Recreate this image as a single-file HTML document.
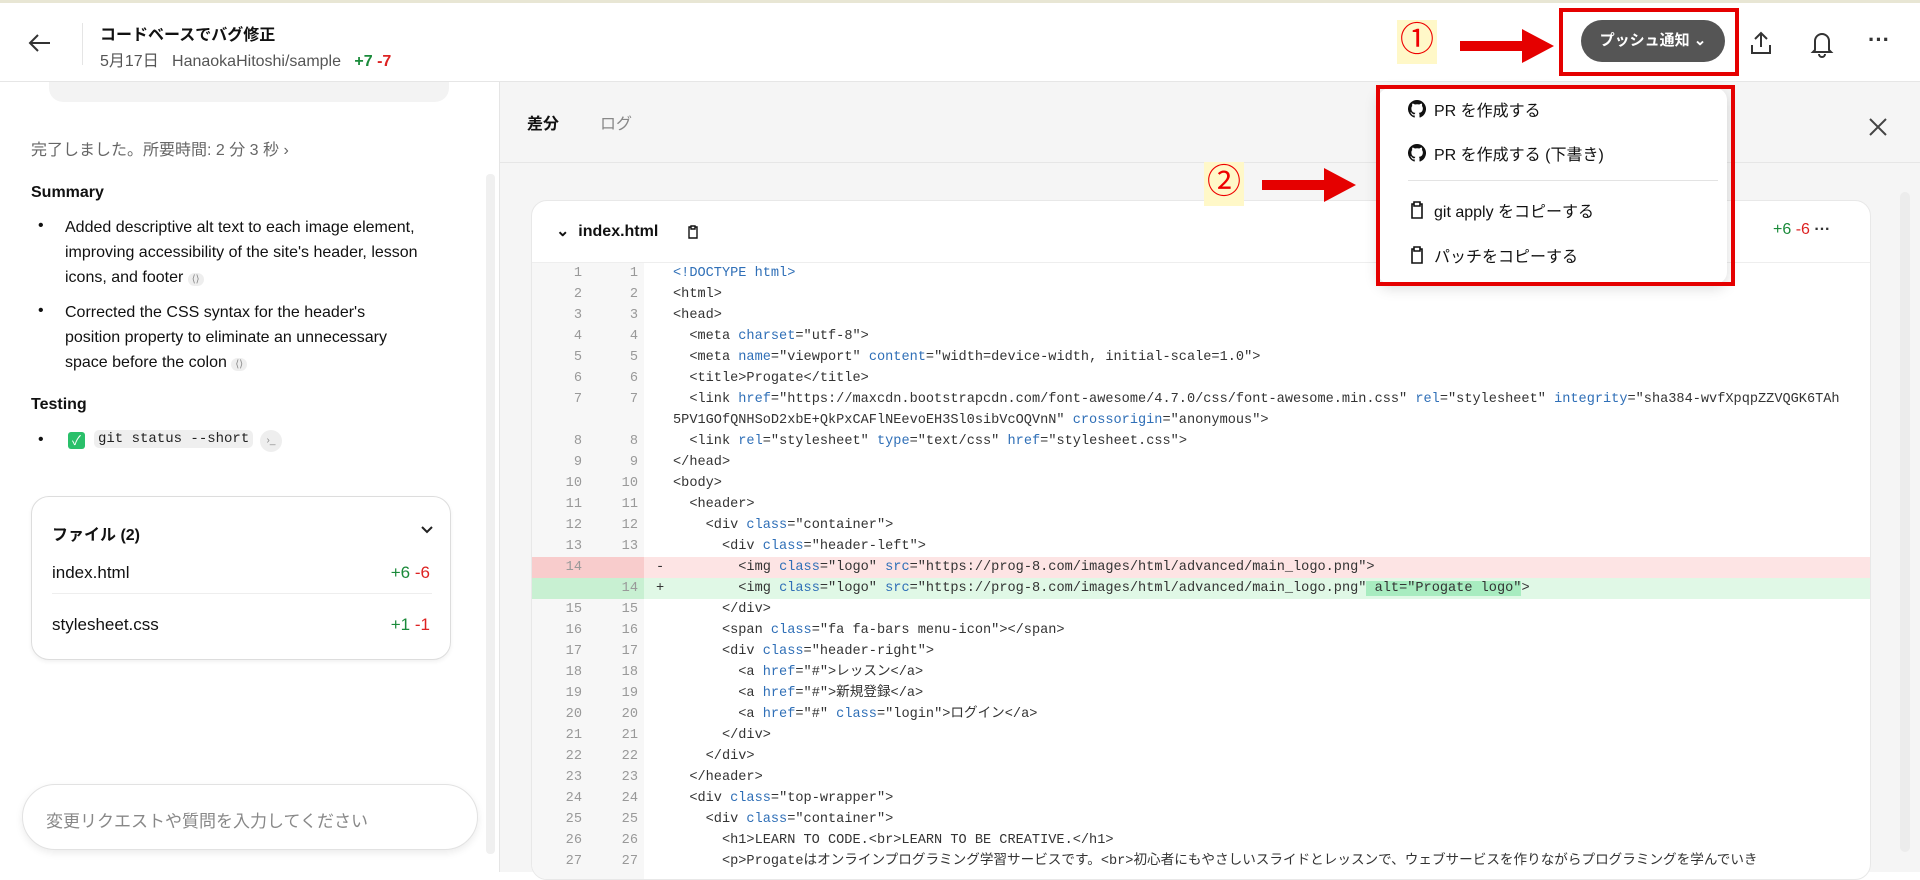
<!DOCTYPE html>
<html><head><meta charset="utf-8"><style>
*{box-sizing:border-box;margin:0;padding:0}
body{width:1920px;height:872px;overflow:hidden;background:#fff;font-family:"Liberation Sans","Noto Sans CJK JP",sans-serif;color:#111;position:relative}
.a{position:absolute}
.top{left:0;top:0;width:1920px;height:82px;border-bottom:1px solid #e6e6e6;background:#fff;border-top:3px solid #e8e6d4;z-index:2}
.left{left:0;top:82px;width:500px;height:790px;background:#fff;border-right:1px solid #e5e5e5;overflow:hidden}
.right{left:500px;top:82px;width:1420px;height:790px;background:#f5f5f5}
.card{left:531px;top:200px;width:1340px;height:680px;background:#fff;border:1px solid #e8e8e8;border-radius:16px;overflow:hidden}
.code{font-family:"Liberation Mono","Noto Sans CJK JP",monospace;font-size:13.6px;color:#333}
.row{position:absolute;left:0;width:1340px;height:21px;line-height:21px}
.n1,.n2{position:absolute;width:40px;text-align:right;color:#999}
.n1{left:10px}.n2{left:66px}
.gut{position:absolute;left:0;top:62px;width:112px;height:640px;background:#f7f7f7}
.tx{position:absolute;left:141px;white-space:pre}
.t{color:#2f6fb7}
.menu{left:1378px;top:88px;width:349px;height:196px;background:#fff;border-radius:12px;box-shadow:0 4px 14px rgba(0,0,0,.15);z-index:3}
.mi{position:absolute;left:30px;font-size:16px;display:flex;align-items:center;gap:8px}
.redbox{border:4px solid #e50000;z-index:4}
.num{background:#fff8c8;color:#e00;font-size:34px;line-height:40px;width:40px;text-align:center;z-index:4}
.bl{position:absolute;left:0;font-size:16px}
.bt{position:absolute;left:27px;width:385px;font-size:16px;line-height:25px}
.ic{font-size:10px;background:#eee;border-radius:8px;padding:1px 4px;color:#888}
</style></head><body>
<div class="a top">
 <svg class="a" style="left:28px;top:30px" width="24" height="20" viewBox="0 0 24 20"><path d="M22 10H3M10 2L2 10l8 8" fill="none" stroke="#333" stroke-width="2"/></svg>
 <div class="a" style="left:82px;top:20px;height:42px;border-left:1px solid #e5e5e5"></div>
 <div class="a" style="left:100px;top:18px;font-size:16px;font-weight:bold">コードベースでバグ修正</div>
 <div class="a" style="left:100px;top:44px;font-size:16px;color:#555">5月17日 &nbsp;&nbsp;HanaokaHitoshi/sample &nbsp;&nbsp;<span style="color:#1a8a3a;font-weight:bold">+7</span> <span style="color:#d22;font-weight:bold">-7</span></div>
 <div class="a num" style="left:1397px;top:17px;height:44px">①</div>
 <svg class="a" style="left:1460px;top:26px" width="96" height="34"><path d="M0 12h62V0l32 17-32 17V22H0z" fill="#e50000"/></svg>
 <div class="a redbox" style="left:1559px;top:5px;width:180px;height:68px"></div>
 <div class="a" style="left:1581px;top:17px;width:144px;height:42px;border-radius:21px;background:#555;color:#fff;font-size:15px;font-weight:bold;line-height:42px;text-align:center">プッシュ通知 ⌄</div>
 <svg class="a" style="left:1749px;top:27px" width="24" height="26" viewBox="0 0 24 26"><path d="M12 17V3M6 9l6-6 6 6M3 15v8h18v-8" fill="none" stroke="#333" stroke-width="2"/></svg>
 <svg class="a" style="left:1810px;top:27px" width="24" height="28" viewBox="0 0 24 28"><path d="M5 20V11a7 7 0 0114 0v9l2 2H3zM9 24a3 3 0 006 0" fill="none" stroke="#333" stroke-width="2"/></svg>
 <div class="a" style="left:1868px;top:24px;font-size:22px;font-weight:bold;color:#333">···</div>
</div>
<div class="a left">
 <div class="a" style="left:49px;top:-20px;width:400px;height:40px;background:#f3f3f3;border-radius:14px"></div>
 <div class="a" style="left:31px;top:54px;font-size:16px;color:#666">完了しました。所要時間: 2 分 3 秒 ›</div>
 <div class="a" style="left:31px;top:102px;font-size:16px;font-weight:bold">Summary</div>
 <div class="a" style="left:38px;top:133px;width:430px;height:200px">
  <div class="bl" style="top:2px">•</div>
  <div class="bt" style="top:0">Added descriptive alt text to each image element, improving accessibility of the site's header, lesson icons, and footer <span class="ic">⟨⟩</span></div>
  <div class="bl" style="top:87px">•</div>
  <div class="bt" style="top:85px;width:355px">Corrected the CSS syntax for the header's position property to eliminate an unnecessary space before the colon <span class="ic">⟨⟩</span></div>
 </div>
 <div class="a" style="left:31px;top:314px;font-size:16px;font-weight:bold">Testing</div>
 <div class="a" style="left:38px;top:349px;font-size:16px">•</div>
 <div class="a" style="left:68px;top:350px;width:17px;height:17px;background:#2ac06a;border-radius:3px;color:#fff;font-size:13px;line-height:17px;text-align:center">✓</div>
 <div class="a code" style="left:94px;top:348px;background:#efefef;border-radius:5px;padding:1px 4px;font-size:14px;color:#222">git status --short</div>
 <div class="a" style="left:260px;top:348px;width:22px;height:22px;background:#eee;border-radius:11px;font-size:10px;color:#888;line-height:22px;text-align:center">›_</div>
 <div class="a" style="left:31px;top:414px;width:420px;height:164px;border:1px solid #ddd;border-radius:18px;box-shadow:0 2px 4px rgba(0,0,0,.06)">
  <div class="a" style="left:20px;top:24px;font-size:16px;font-weight:bold">ファイル (2)</div>
  <svg class="a" style="left:388px;top:28px" width="14" height="10"><path d="M2 2l5 5 5-5" fill="none" stroke="#222" stroke-width="2"/></svg>
  <div class="a" style="left:20px;top:66px;font-size:17px">index.html</div>
  <div class="a" style="right:20px;top:66px;font-size:17px"><span style="color:#1a8a3a">+6</span> <span style="color:#d22">-6</span></div>
  <div class="a" style="left:20px;top:96px;width:380px;border-top:1px solid #eee"></div>
  <div class="a" style="left:20px;top:118px;font-size:17px">stylesheet.css</div>
  <div class="a" style="right:20px;top:118px;font-size:17px"><span style="color:#1a8a3a">+1</span> <span style="color:#d22">-1</span></div>
 </div>
 <div class="a" style="left:22px;top:702px;width:456px;height:66px;border:1px solid #e2e2e2;border-radius:33px;box-shadow:0 3px 8px rgba(0,0,0,.08);background:#fff">
  <div class="a" style="left:23px;top:22px;font-size:17px;color:#888">変更リクエストや質問を入力してください</div>
 </div>
 <div class="a" style="left:486px;top:92px;width:9px;height:680px;background:#f0f0f0;border-radius:4px"></div>
</div>
<div class="a right">
 <div class="a" style="left:27px;top:28px;font-size:16px;font-weight:bold">差分</div>
 <div class="a" style="left:100px;top:28px;font-size:16px;color:#888">ログ</div>
 <svg class="a" style="left:1368px;top:35px" width="20" height="20"><path d="M2 2l16 16M18 2L2 18" stroke="#444" stroke-width="2"/></svg>
 <div class="a" style="left:0;top:80px;width:1420px;border-top:1px solid #e6e6e6"></div>
 <div class="a" style="left:1400px;top:110px;width:10px;height:660px;background:#ececec;border-radius:5px"></div>
</div>
<div class="a card code">
 <div class="a" style="left:24px;top:20px;font-family:'Liberation Sans',sans-serif;font-size:16px;font-weight:bold;color:#111">⌄ &nbsp;index.html</div>
 <svg class="a" style="left:155px;top:24px" width="12" height="15" viewBox="0 0 12 15"><path d="M4 2H2v11h8V2H8M4 1h4v3H4z" fill="none" stroke="#111" stroke-width="1.4"/></svg>
 <div class="a" style="left:1241px;top:20px;font-family:'Liberation Sans',sans-serif;font-size:16px"><span style="color:#1a8a3a">+6</span> <span style="color:#d22">-6</span> <b style="color:#333">···</b></div>
 <div class="a" style="left:0;top:61px;width:1340px;border-top:1px solid #eee"></div>
 <div class="gut"></div>
 <div id="rows"></div>
</div>
<div class="a menu">
 <div class="mi" style="top:9px"><svg width="18" height="18" viewBox="0 0 16 16"><path fill="#111" d="M8 0a8 8 0 00-2.5 15.6c.4 0 .5-.2.5-.4v-1.5c-2.2.5-2.7-1-2.7-1-.4-.9-.9-1.2-.9-1.2-.7-.5.1-.5.1-.5.8.1 1.2.8 1.2.8.7 1.3 1.9.9 2.4.7 0-.5.3-.9.5-1.1-1.8-.2-3.6-.9-3.6-4 0-.9.3-1.6.8-2.1-.1-.2-.4-1 .1-2.1 0 0 .7-.2 2.2.8a7.5 7.5 0 014 0c1.5-1 2.2-.8 2.2-.8.4 1.1.2 1.9.1 2.1.5.6.8 1.3.8 2.1 0 3.1-1.9 3.8-3.6 4 .3.3.6.8.6 1.5v2.2c0 .2.1.5.6.4A8 8 0 008 0z"/></svg>PR を作成する</div>
 <div class="mi" style="top:53px"><svg width="18" height="18" viewBox="0 0 16 16"><path fill="#111" d="M8 0a8 8 0 00-2.5 15.6c.4 0 .5-.2.5-.4v-1.5c-2.2.5-2.7-1-2.7-1-.4-.9-.9-1.2-.9-1.2-.7-.5.1-.5.1-.5.8.1 1.2.8 1.2.8.7 1.3 1.9.9 2.4.7 0-.5.3-.9.5-1.1-1.8-.2-3.6-.9-3.6-4 0-.9.3-1.6.8-2.1-.1-.2-.4-1 .1-2.1 0 0 .7-.2 2.2.8a7.5 7.5 0 014 0c1.5-1 2.2-.8 2.2-.8.4 1.1.2 1.9.1 2.1.5.6.8 1.3.8 2.1 0 3.1-1.9 3.8-3.6 4 .3.3.6.8.6 1.5v2.2c0 .2.1.5.6.4A8 8 0 008 0z"/></svg>PR を作成する (下書き)</div>
 <div class="a" style="left:30px;top:92px;width:310px;border-top:1px solid #e3e3e3"></div>
 <div class="mi" style="top:110px"><svg width="18" height="18" viewBox="0 0 18 18"><path d="M6 3H4v14h10V3h-2M6 1h6v4H6z" fill="none" stroke="#111" stroke-width="1.6"/></svg>git apply をコピーする</div>
 <div class="mi" style="top:155px"><svg width="18" height="18" viewBox="0 0 18 18"><path d="M6 3H4v14h10V3h-2M6 1h6v4H6z" fill="none" stroke="#111" stroke-width="1.6"/></svg>パッチをコピーする</div>
</div>
<div class="a redbox" style="left:1376px;top:85px;width:359px;height:201px"></div>
<div class="a num" style="left:1204px;top:162px;height:44px">②</div>
<svg class="a" style="left:1262px;top:168px;z-index:4" width="96" height="34"><path d="M0 12h62V0l32 17-32 17V22H0z" fill="#e50000"/></svg>
<script>
const L=[
[1,1,'<span class="t">&lt;!DOCTYPE html&gt;</span>'],
[2,2,'&lt;html&gt;'],[3,3,'&lt;head&gt;'],
[4,4,'  &lt;meta <span class="t">charset</span>="utf-8"&gt;'],
[5,5,'  &lt;meta <span class="t">name</span>="viewport" <span class="t">content</span>="width=device-width, initial-scale=1.0"&gt;'],
[6,6,'  &lt;title&gt;Progate&lt;/title&gt;'],
[7,7,'  &lt;link <span class="t">href</span>="https://maxcdn.bootstrapcdn.com/font-awesome/4.7.0/css/font-awesome.min.css" <span class="t">rel</span>="stylesheet" <span class="t">integrity</span>="sha384-wvfXpqpZZVQGK6TAh'],
['','','5PV1GOfQNHSoD2xbE+QkPxCAFlNEevoEH3Sl0sibVcOQVnN" <span class="t">crossorigin</span>="anonymous"&gt;'],
[8,8,'  &lt;link <span class="t">rel</span>="stylesheet" <span class="t">type</span>="text/css" <span class="t">href</span>="stylesheet.css"&gt;'],
[9,9,'&lt;/head&gt;'],[10,10,'&lt;body&gt;'],[11,11,'  &lt;header&gt;'],
[12,12,'    &lt;div <span class="t">class</span>="container"&gt;'],
[13,13,'      &lt;div <span class="t">class</span>="header-left"&gt;'],
[14,'','        &lt;img <span class="t">class</span>="logo" <span class="t">src</span>="https://prog-8.com/images/html/advanced/main_logo.png"&gt;','d'],
['',14,'        &lt;img <span class="t">class</span>="logo" <span class="t">src</span>="https://prog-8.com/images/html/advanced/main_logo.png"<span style="background:#a8ecc0"> alt="Progate logo"</span>&gt;','a'],
[15,15,'      &lt;/div&gt;'],
[16,16,'      &lt;span <span class="t">class</span>="fa fa-bars menu-icon"&gt;&lt;/span&gt;'],
[17,17,'      &lt;div <span class="t">class</span>="header-right"&gt;'],
[18,18,'        &lt;a <span class="t">href</span>="#"&gt;レッスン&lt;/a&gt;'],
[19,19,'        &lt;a <span class="t">href</span>="#"&gt;新規登録&lt;/a&gt;'],
[20,20,'        &lt;a <span class="t">href</span>="#" <span class="t">class</span>="login"&gt;ログイン&lt;/a&gt;'],
[21,21,'      &lt;/div&gt;'],[22,22,'    &lt;/div&gt;'],[23,23,'  &lt;/header&gt;'],
[24,24,'  &lt;div <span class="t">class</span>="top-wrapper"&gt;'],
[25,25,'    &lt;div <span class="t">class</span>="container"&gt;'],
[26,26,'      &lt;h1&gt;LEARN TO CODE.&lt;br&gt;LEARN TO BE CREATIVE.&lt;/h1&gt;'],
[27,27,'      &lt;p&gt;Progateはオンラインプログラミング学習サービスです。&lt;br&gt;初心者にもやさしいスライドとレッスンで、ウェブサービスを作りながらプログラミングを学んでいき']
];
let h='';L.forEach((r,i)=>{const y=62+i*21;let bg='',g='',m='';
if(r[3]=='d'){bg='background:#fde4e4';g='<div style="position:absolute;left:0;width:112px;height:21px;background:#f8cccc"></div>';m='-'}
if(r[3]=='a'){bg='background:#e0f8e6';g='<div style="position:absolute;left:0;width:112px;height:21px;background:#c8f0d2"></div>';m='+'}
h+=`<div class="row" style="top:${y}px;${bg}">${g}<span class="n1">${r[0]}</span><span class="n2">${r[1]}</span><span style="position:absolute;left:124px">${m}</span><span class="tx">${r[2]}</span></div>`});
document.getElementById('rows').innerHTML=h;
</script>
</body></html>
